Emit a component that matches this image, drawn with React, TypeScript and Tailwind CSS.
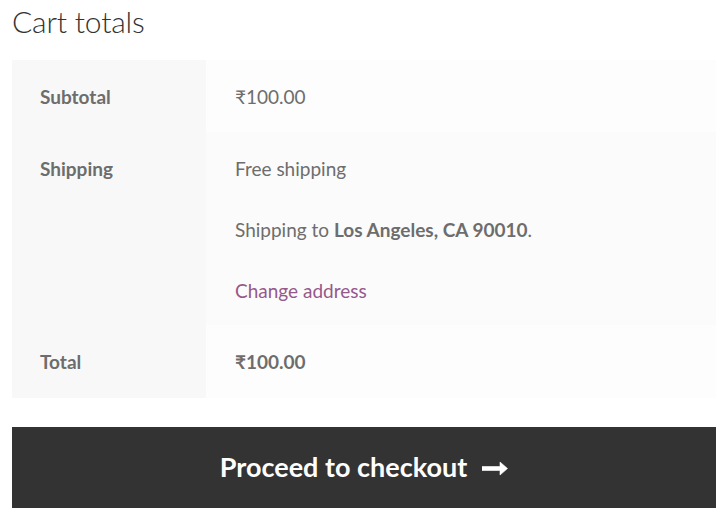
import React from "react";

export default function App() {
  return (
    <div className="w-[727px] h-[519px] bg-white overflow-hidden" style={{ fontFamily: "Lato, 'Noto Sans', sans-serif" }}>
      <div className="px-[12px] pr-[11px]">
        <h2 className="text-[30px] font-light text-[#333333] leading-[43px] h-[60px] tracking-[-0.2px]">Cart totals</h2>
        <div className="text-[19px] text-[#6d6d6d] leading-[31px]">
          <div className="flex h-[72px]">
            <div className="w-[194px] bg-[#f8f8f8] pl-[28px] flex items-center font-bold">Subtotal</div>
            <div className="flex-1 bg-[#fdfdfd] pl-[29px] flex items-center">₹100.00</div>
          </div>
          <div className="flex h-[193px]">
            <div className="w-[194px] bg-[#f8f8f8] pl-[28px] pt-[21px] font-bold">Shipping</div>
            <div className="flex-1 bg-[#fbfbfb] pl-[29px] pt-[21px] flex flex-col gap-[30px]">
              <p>Free shipping</p>
              <p>
                Shipping to <strong className="font-bold">Los Angeles, CA 90010</strong>.
              </p>
              <p className="text-[#96588a]">Change address</p>
            </div>
          </div>
          <div className="flex h-[73px]">
            <div className="w-[194px] bg-[#f8f8f8] pl-[28px] flex items-center font-bold">Total</div>
            <div className="flex-1 bg-[#fdfdfd] pl-[29px] flex items-center font-bold">₹100.00</div>
          </div>
        </div>
        <div className="mt-[29px] h-[81px] bg-[#333333] flex items-center justify-center text-white text-[27px] font-bold gap-[15px]">
          <span>Proceed to checkout</span>
          <svg width="26" height="15" viewBox="0 0 26 15" className="mt-[1px]">
            <path d="M0 5.5 H18 V1 L25.5 7.5 L18 14 V9.5 H0 Z" fill="white" strokeLinejoin="round" stroke="white" strokeWidth="0.6" />
          </svg>
        </div>
      </div>
    </div>
  );
}
